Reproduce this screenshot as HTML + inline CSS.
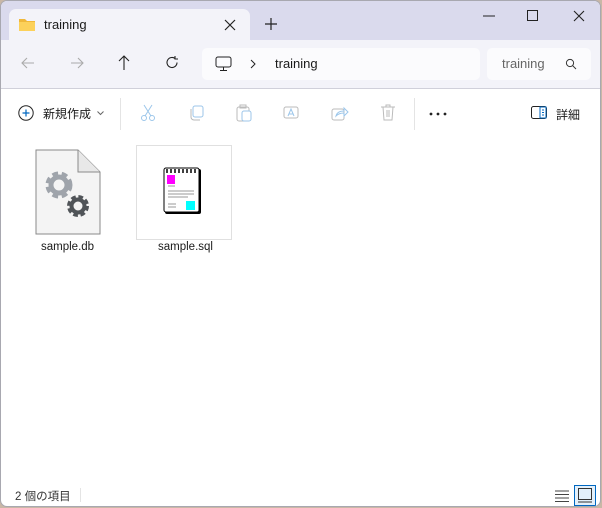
<!DOCTYPE html>
<html><head><meta charset="utf-8"><style>
*{margin:0;padding:0;box-sizing:border-box}
body{width:602px;height:508px;background:#c9b7a6;font-family:"Liberation Sans","Noto Sans CJK JP",sans-serif;position:relative;overflow:hidden}
.win{position:absolute;left:0;top:0;width:601px;height:507px;background:#fff;border:1px solid #a8a8b0;border-radius:7px;overflow:hidden}
.title{position:absolute;left:0;top:0;width:100%;height:40px;background:#dadaed}
.tab{position:absolute;left:8px;top:8px;width:241px;height:33px;background:#f3f3f9;border-radius:7px 7px 0 0}
.nav{position:absolute;left:0;top:39px;width:100%;height:49px;background:#f3f3f9;border-bottom:1px solid #d0d0da}
.addr{position:absolute;left:201px;top:8px;width:278px;height:32px;background:#fbfbfd;border-radius:5px}
.srch{position:absolute;left:486px;top:8px;width:104px;height:32px;background:#fbfbfd;border-radius:5px}
.t{position:absolute;font-size:13px;color:#1a1a1a;white-space:nowrap}
svg{position:absolute}
.sep{position:absolute;width:1px;background:#e4e4e4}
</style></head><body>
<div class="win">
<div class="title">
 <div class="tab">
  <svg style="left:9px;top:8px" width="18" height="15" viewBox="0 0 18 15"><path d="M1 2h6l2 2h8v10H1z" fill="#f0b83a"/><path d="M1 5h16v9H1z" fill="#fcd15a"/></svg>
  <div class="t" style="left:35px;top:8px;font-size:13px">training</div>
  <svg style="left:215px;top:10px" width="12" height="12"><path d="M1 1l10 10M11 1L1 11" stroke="#222" stroke-width="1.2"/></svg>
 </div>
 <svg style="left:264px;top:17px" width="12" height="12"><path d="M6 0v12M0 6h12" stroke="#222" stroke-width="1.2"/></svg>
 <svg style="left:482px;top:14px" width="12" height="2"><path d="M0 1h12" stroke="#222"/></svg>
 <svg style="left:526px;top:9px" width="12" height="12"><rect x=".5" y=".5" width="10" height="10" fill="none" stroke="#222"/></svg>
 <svg style="left:572px;top:9px" width="12" height="12"><path d="M1 1l10 10M11 1L1 11" stroke="#222" stroke-width="1.1"/></svg>
</div>
<div class="nav">
 <svg style="left:20px;top:17px" width="14" height="12"><path d="M13 6H1M6 1L1 6l5 5" fill="none" stroke="#aaa" stroke-width="1.1"/></svg>
 <svg style="left:69px;top:17px" width="14" height="12"><path d="M1 6h12M8 1l5 5-5 5" fill="none" stroke="#aaa" stroke-width="1.1"/></svg>
 <svg style="left:117px;top:15px" width="12" height="15"><path d="M6 15V1M1 6l5-5 5 5" fill="none" stroke="#222" stroke-width="1.1"/></svg>
 <svg style="left:165px;top:16px" width="13" height="13"><path d="M11 6.5A5 5 0 1 1 9 2.5M9 0v3h3" fill="none" stroke="#222" stroke-width="1.1"/></svg>
 <div class="addr">
  <svg style="left:13px;top:8px" width="17" height="16"><rect x="1" y="1" width="15" height="10" rx="2" fill="none" stroke="#222"/><path d="M8.5 11v3M5 14.5h7" stroke="#222"/></svg>
  <svg style="left:48px;top:11px" width="6" height="10"><path d="M1 1l4 4-4 4" fill="none" stroke="#222"/></svg>
  <div class="t" style="left:73px;top:8px">training</div>
 </div>
 <div class="srch">
  <div class="t" style="left:15px;top:8px;color:#666;width:46px;overflow:hidden">training</div>
  <svg style="left:78px;top:10px" width="12" height="12"><circle cx="5" cy="5" r="3.6" fill="none" stroke="#333"/><path d="M7.7 7.7L11 11" stroke="#333"/></svg>
 </div>
</div>
<svg style="left:17px;top:104px" width="16" height="16"><circle cx="8" cy="8" r="7.2" fill="none" stroke="#222"/><path d="M8 4.5v7M4.5 8h7" stroke="#0067c0" stroke-width="1.2"/></svg>
<div class="t" style="left:42px;top:104px;font-size:12px">新規作成</div>
<svg style="left:96px;top:110px" width="7" height="5"><path d="M.5.5l3 3 3-3" fill="none" stroke="#666"/></svg>
<div class="sep" style="left:119px;top:97px;height:32px"></div>
<svg style="left:139px;top:103px" width="16" height="18"><path d="M4 1l7 11M12 1L5 12" stroke="#9cc6ea"/><circle cx="4" cy="14" r="2.5" fill="none" stroke="#9cc6ea"/><circle cx="12" cy="14" r="2.5" fill="none" stroke="#9cc6ea"/></svg>
<svg style="left:187px;top:104px" width="16" height="16"><rect x="5" y="1" width="10" height="11" rx="2" fill="none" stroke="#9cc6ea"/><path d="M3 4v8a3 3 0 0 0 3 3h6" fill="none" stroke="#b8b8b8"/></svg>
<svg style="left:235px;top:103px" width="16" height="18"><rect x="1" y="3" width="12" height="14" rx="2" fill="none" stroke="#bbb"/><rect x="6" y="7" width="9" height="10" rx="2" fill="#fff" stroke="#9cc6ea"/><rect x="4" y="1" width="6" height="3" fill="none" stroke="#bbb"/></svg>
<svg style="left:282px;top:103px" width="18" height="18"><rect x="1" y="3" width="14" height="11" rx="2" fill="none" stroke="#bbb"/><path d="M5 12l3-7 3 7M6 10h4" fill="none" stroke="#9cc6ea"/></svg>
<svg style="left:330px;top:104px" width="18" height="16"><rect x="1" y="4" width="12" height="11" rx="2" fill="none" stroke="#bbb"/><path d="M5 11c1-4 4-5 8-5V3l4 4-4 4V8c-3 0-6 1-8 3z" fill="none" stroke="#9cc6ea"/></svg>
<svg style="left:379px;top:103px" width="16" height="18"><path d="M1 3h14M6 3V1h4v2M3 3l1 13h8l1-13M7 6v7M9 6v7" fill="none" stroke="#bbb"/></svg>
<div class="sep" style="left:413px;top:97px;height:32px"></div>
<svg style="left:428px;top:111px" width="18" height="4"><circle cx="2" cy="2" r="1.4" fill="#222"/><circle cx="9" cy="2" r="1.4" fill="#222"/><circle cx="16" cy="2" r="1.4" fill="#222"/></svg>
<svg style="left:530px;top:105px" width="18" height="14"><rect x=".5" y=".5" width="15" height="12" rx="2" fill="none" stroke="#222"/><rect x="9" y="1" width="6" height="11" fill="#fff" stroke="#0067c0"/><path d="M11 4h2M11 6.5h2M11 9h2" stroke="#0067c0"/></svg>
<div class="t" style="left:555px;top:105px;font-size:12px">詳細</div>
<svg style="left:34px;top:148px" width="66" height="86" viewBox="0 0 66 86"><path d="M1 1h42l22 22v62H1z" fill="#f4f4f4" stroke="#8a8a8a"/><path d="M43 1v22h22" fill="#e8e8e8" stroke="#8a8a8a"/>
<g transform="translate(24,36)"><circle r="10" fill="none" stroke="#9fa4ab" stroke-width="7" stroke-dasharray="5 3.2"/><circle r="8" fill="none" stroke="#9fa4ab" stroke-width="5"/><circle r="4.5" fill="#f4f4f4"/></g>
<g transform="translate(43,57)"><circle r="8" fill="none" stroke="#505458" stroke-width="6" stroke-dasharray="4 2.3"/><circle r="6.5" fill="none" stroke="#505458" stroke-width="4"/><circle r="3.5" fill="#f4f4f4"/></g></svg>
<div class="t" style="left:40px;top:240px;font-size:11.5px">sample.db</div>
<div style="position:absolute;left:135px;top:144px;width:96px;height:95px;border:1px solid #e0e0e0"></div>
<svg style="left:162px;top:166px" width="42" height="50" viewBox="0 0 42 50"><rect x="2" y="2" width="36" height="45" rx="2" fill="#000"/><rect x="1" y="1" width="35" height="44" rx="2" fill="#fff" stroke="#000"/><path d="M4 2v4M8 2v4M12 2v4M16 2v4M20 2v4M24 2v4M28 2v4M32 2v4" stroke="#000" stroke-width="1.5"/><rect x="4" y="8" width="8" height="9" fill="#f0f"/><path d="M5 19h7M5 24h26M5 27h26M5 30h20M5 37h8M5 40h8" stroke="#999"/><rect x="23" y="34" width="9" height="9" fill="#0ff"/></svg>
<div class="t" style="left:157px;top:240px;font-size:11.5px">sample.sql</div>
<div class="t" style="left:14px;top:487px;font-size:11.5px;color:#333">2 個の項目</div>
<div class="sep" style="left:79px;top:487px;height:14px"></div>
<svg style="left:554px;top:489px" width="14" height="12"><path d="M0 1h14M0 4.5h14M0 8h14M0 11.5h14" stroke="#444"/></svg>
<div style="position:absolute;left:573px;top:484px;width:22px;height:21px;border:1px solid #0067c0;background:#e3f0fb"></div>
<svg style="left:577px;top:487px" width="14" height="15"><rect x=".5" y=".5" width="13" height="11" fill="none" stroke="#333"/><path d="M0 14h14" stroke="#333"/></svg>
</div>
</body></html>
